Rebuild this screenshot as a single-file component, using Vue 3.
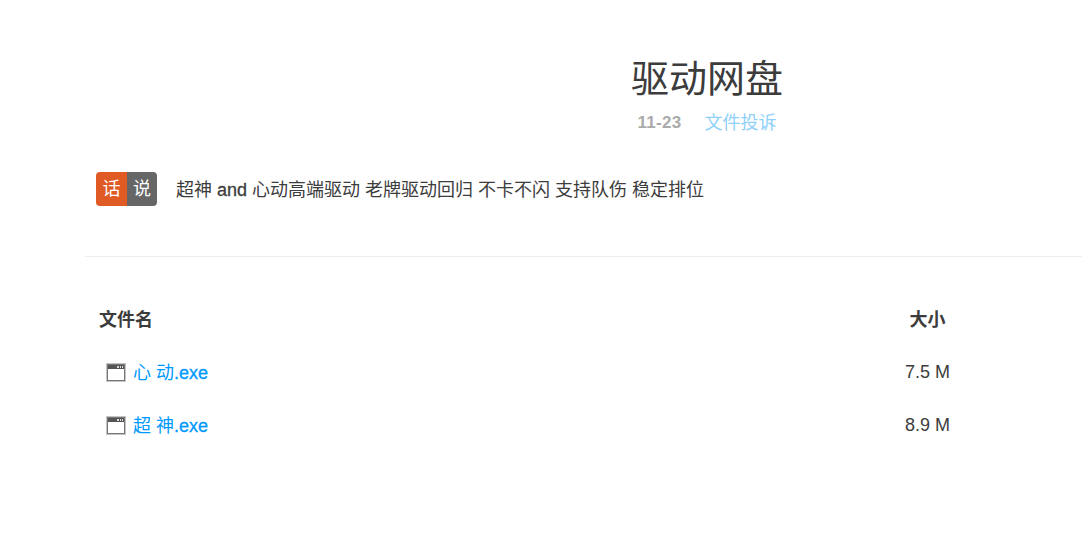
<template>
  <div class="page">
    <header class="head">
      <h1 class="title">驱动网盘</h1>
      <div class="meta">
        <span class="date">11-23</span>
        <a class="report">文件投诉</a>
      </div>
    </header>

    <section class="note">
      <div class="badge">
        <span class="badge-a">话</span>
        <span class="badge-b">说</span>
      </div>
      <p class="note-text">超神 <span class="latin">and</span> 心动高端驱动 老牌驱动回归 不卡不闪 支持队伤 稳定排位</p>
    </section>

    <div class="files">
      <div class="row row-head">
        <span class="name">文件名</span>
        <span class="size">大小</span>
      </div>
      <div v-for="file in files" :key="file.name" class="row row-file">
        <span class="name file">
          <svg class="icon" width="20" height="20" viewBox="0 0 20 20">
            <rect x="0.5" y="1.5" width="19" height="18" fill="#fff" stroke="#c4c4c4" />
            <rect x="1.5" y="2.5" width="17" height="16" fill="#fff" stroke="#777" />
            <rect x="2" y="3" width="16" height="4" fill="#555" />
            <rect x="11" y="4" width="2" height="2" fill="#ddd" />
            <rect x="14" y="4" width="1" height="2" fill="#ddd" />
            <rect x="16" y="4" width="1" height="2" fill="#ddd" />
          </svg>
          <a class="link">{{ file.name }}<span class="latin">.exe</span></a>
        </span>
        <span class="size">{{ file.size }}</span>
      </div>
    </div>
  </div>
</template>

<script setup>
const files = [
  { name: '心 动', size: '7.5 M' },
  { name: '超 神', size: '8.9 M' }
]
</script>

<style>
html,
body {
  margin: 0;
  background: #fff;
  overflow: hidden;
}

#app {
  overflow: hidden;
}
</style>

<style scoped>
.page {
  width: 1244px;
  margin-left: 85px;
  font-family: "Liberation Sans", "Noto Sans CJK SC", sans-serif;
  font-size: 18px;
  color: #3c3c3c;
}

.head {
  padding-top: 54px;
  text-align: center;
}

.title {
  margin: 0;
  font-size: 38px;
  line-height: 50px;
  font-weight: 400;
}

.meta {
  margin-top: 6px;
  display: flex;
  justify-content: center;
  gap: 23px;
  line-height: 26px;
}

.date {
  color: #aaa;
  font-weight: 700;
  font-size: 17px;
  letter-spacing: 0.3px;
}

.report {
  color: #8fd0fb;
}

.note {
  margin-top: 36px;
  padding: 0 0 48px 11px;
  display: flex;
  align-items: flex-start;
  border-bottom: 1px solid #eee;
}

.badge {
  display: flex;
  height: 34px;
  border-radius: 4px;
  overflow: hidden;
  line-height: 34px;
  color: #fff;
}

.badge-a {
  width: 31px;
  text-align: center;
  background: #e05a24;
}

.badge-b {
  width: 30px;
  text-align: center;
  background: #666;
}

.note-text {
  margin: 0 0 0 19px;
  line-height: 36px;
}

.latin {
  -webkit-text-stroke: 0.3px currentColor;
}

.files {
  margin-top: 34px;
}

.row {
  display: grid;
  grid-template-columns: 782px 121px;
  height: 53px;
  align-items: center;
}

.row-head {
  font-weight: 700;
}

.row-head .name {
  padding-left: 14px;
}

.row-file .size {
  padding-top: 4px;
}

.size {
  text-align: center;
}

.file {
  display: flex;
  align-items: center;
  padding-left: 21px;
}

.icon {
  flex: none;
  margin-top: 2px;
}

.link {
  margin-left: 7px;
  color: #0099ff;
}
</style>
